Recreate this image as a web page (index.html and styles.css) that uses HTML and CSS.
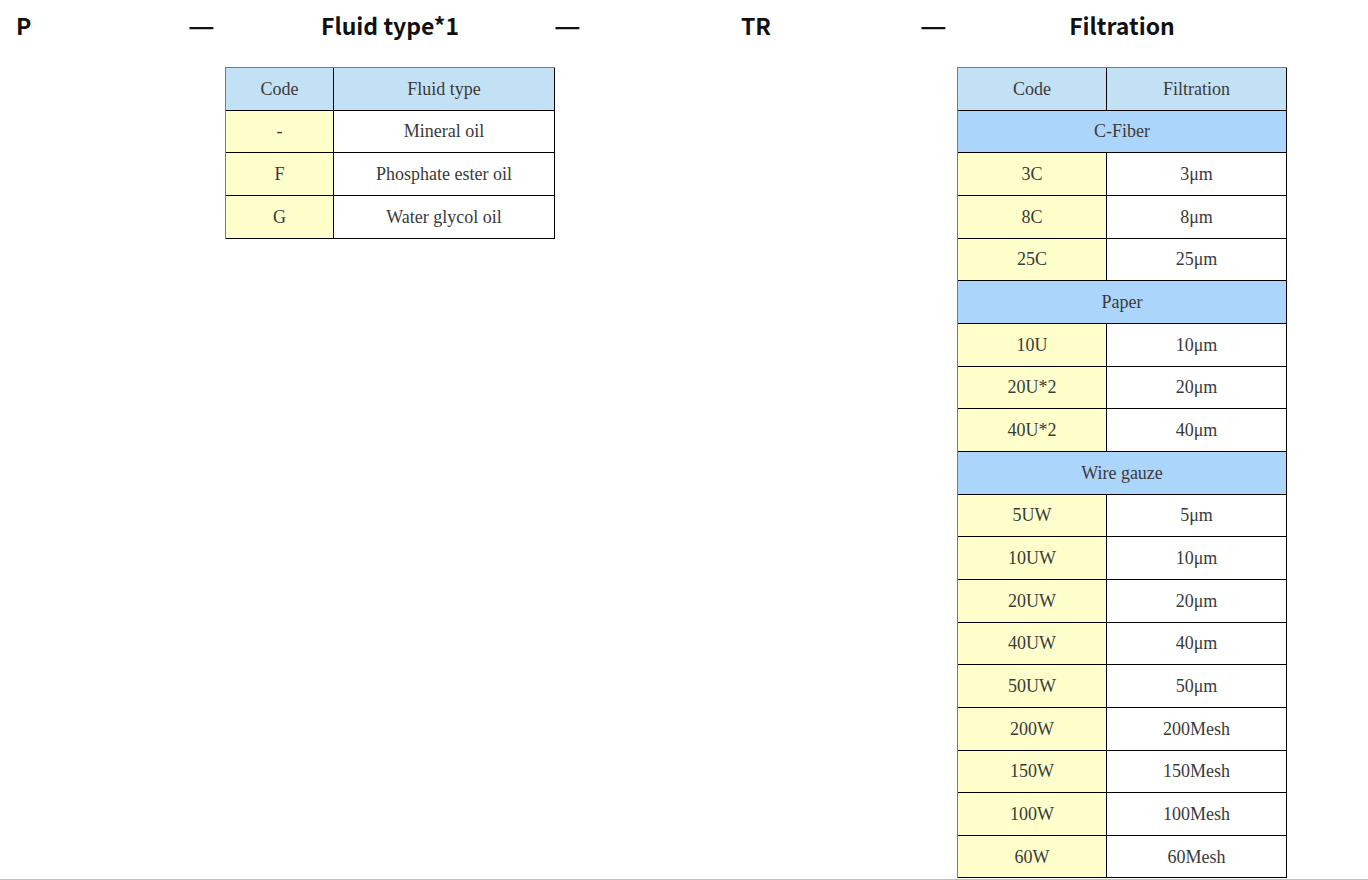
FILE: index.html
```html
<!DOCTYPE html>
<html lang="en">
<head>
<meta charset="utf-8">
<title>Model code</title>
<link rel="stylesheet" href="styles.css">
</head>
<body>
<div class="page">
  <div class="cols">
    <div class="col"><div class="head head-left">P</div></div>
    <div class="col"><div class="head"><span class="dash">—</span></div></div>
    <div class="col">
      <div class="head head-center">Fluid type*1</div>
      <table class="spec spec-fluid">
        <tr class="thead"><td class="code">Code</td><td>Fluid type</td></tr>
        <tr><td class="code ycell">-</td><td>Mineral oil</td></tr>
        <tr><td class="code ycell">F</td><td>Phosphate ester oil</td></tr>
        <tr><td class="code ycell">G</td><td>Water glycol oil</td></tr>
      </table>
    </div>
    <div class="col"><div class="head"><span class="dash">—</span></div></div>
    <div class="col"><div class="head head-center">TR</div></div>
    <div class="col"><div class="head"><span class="dash">—</span></div></div>
    <div class="col">
      <div class="head head-center">Filtration</div>
      <table class="spec spec-filter">
        <tr class="thead"><td class="code">Code</td><td>Filtration</td></tr>
        <tr class="group"><td colspan="2">C-Fiber</td></tr>
        <tr><td class="code ycell">3C</td><td>3μm</td></tr>
        <tr><td class="code ycell">8C</td><td>8μm</td></tr>
        <tr><td class="code ycell">25C</td><td>25μm</td></tr>
        <tr class="group"><td colspan="2">Paper</td></tr>
        <tr><td class="code ycell">10U</td><td>10μm</td></tr>
        <tr><td class="code ycell">20U*2</td><td>20μm</td></tr>
        <tr><td class="code ycell">40U*2</td><td>40μm</td></tr>
        <tr class="group"><td colspan="2">Wire gauze</td></tr>
        <tr><td class="code ycell">5UW</td><td>5μm</td></tr>
        <tr><td class="code ycell">10UW</td><td>10μm</td></tr>
        <tr><td class="code ycell">20UW</td><td>20μm</td></tr>
        <tr><td class="code ycell">40UW</td><td>40μm</td></tr>
        <tr><td class="code ycell">50UW</td><td>50μm</td></tr>
        <tr><td class="code ycell">200W</td><td>200Mesh</td></tr>
        <tr><td class="code ycell">150W</td><td>150Mesh</td></tr>
        <tr><td class="code ycell">100W</td><td>100Mesh</td></tr>
        <tr><td class="code ycell">60W</td><td>60Mesh</td></tr>
      </table>
    </div>
  </div>
</div>
<div class="rule"></div>
</body>
</html>
```

FILE: styles.css
```css
html, body {
  margin: 0;
  padding: 0;
  background: #ffffff;
}

.page {
  padding: 8px 0 0 8px;
  height: 871px;
  box-sizing: content-box;
}

.cols {
  display: grid;
  grid-template-columns: 181px 36px 330px 36px 330px 36px 330px;
  align-items: start;
}

.col {
  display: flex;
  flex-direction: column;
}

.head {
  height: 59px;
  font-family: "Noto Sans CJK JP", "Noto Sans", sans-serif;
  font-weight: 700;
  font-size: 23px;
  line-height: normal;
  color: #111111;
}

.head-left {
  padding-left: 8px;
}

.dash {
  display: inline-block;
  margin-left: -1px;
  transform: scaleX(1.28);
  transform-origin: left center;
}

.head-center {
  text-align: center;
}

.spec {
  width: 330px;
  border-collapse: separate;
  border-spacing: 0;
  border-top: 1px solid #7a7a7a;
  border-left: 1px solid #7a7a7a;
  font-family: "Liberation Serif", "Times New Roman", serif;
  font-size: 18px;
  color: #3a3a3a;
}

.spec td {
  padding: 0;
  height: 41.67px;
  line-height: 20px;
  text-align: center;
  vertical-align: middle;
  border-right: 1px solid #000000;
  border-bottom: 1px solid #000000;
  background: #ffffff;
}

.spec .thead td {
  background: #c3e1f5;
}

.spec .group td {
  background: #acd5fc;
}

.spec td.ycell {
  background: #ffffcc;
}

.spec-fluid td.code {
  width: 107px;
}

.spec-filter td.code {
  width: 148px;
}

.rule {
  height: 1px;
  background: #c4c2bc;
}
```
